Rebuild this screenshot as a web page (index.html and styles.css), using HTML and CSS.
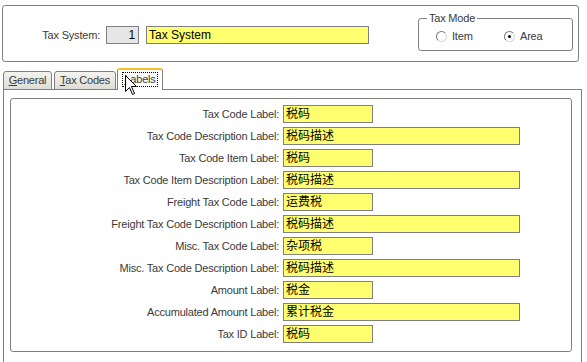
FILE: index.html
```html
<!DOCTYPE html>
<html lang="en">
<head>
<meta charset="UTF-8">
<meta name="viewport" content="width=device-width, initial-scale=1.0">
<title>Tax System</title>
<link rel="stylesheet" href="styles.css">
</head>
<body>
  <div class="header">
    <div class="sys-row">
      <span class="sys-label">Tax System:</span>
      <span class="num-box">1</span>
      <span class="field field-name">Tax System</span>
    </div>
    <fieldset class="mode-group">
      <legend>Tax Mode</legend>
      <label class="radio"><span class="dot"></span>Item</label>
      <label class="radio"><span class="dot checked"></span>Area</label>
    </fieldset>
  </div>

  <div class="tabs">
    <div class="tab"><u>G</u>eneral</div>
    <div class="tab tab-codes"><u>T</u>ax Codes</div>
    <div class="tab active"><span class="focus"><u>L</u>abels</span></div>
  </div>

  <div class="panel">
    <div class="inner">
      <div class="row"><span class="lbl">Tax Code Label:</span><span class="field short">税码</span></div>
      <div class="row"><span class="lbl">Tax Code Description Label:</span><span class="field long">税码描述</span></div>
      <div class="row"><span class="lbl">Tax Code Item Label:</span><span class="field short">税码</span></div>
      <div class="row"><span class="lbl">Tax Code Item Description Label:</span><span class="field long">税码描述</span></div>
      <div class="row"><span class="lbl">Freight Tax Code Label:</span><span class="field short">运费税</span></div>
      <div class="row"><span class="lbl">Freight Tax Code Description Label:</span><span class="field long">税码描述</span></div>
      <div class="row"><span class="lbl">Misc. Tax Code Label:</span><span class="field short">杂项税</span></div>
      <div class="row"><span class="lbl">Misc. Tax Code Description Label:</span><span class="field long">税码描述</span></div>
      <div class="row"><span class="lbl">Amount Label:</span><span class="field short">税金</span></div>
      <div class="row"><span class="lbl">Accumulated Amount Label:</span><span class="field long">累计税金</span></div>
      <div class="row"><span class="lbl">Tax ID Label:</span><span class="field short">税码</span></div>
    </div>
  </div>

  <svg class="cursor" width="13" height="21" viewBox="0 0 13 21">
    <path d="M0.5 0.5 L0.5 16.5 L4.5 12.5 L7.5 19.5 L9.5 18.5 L6.5 11.5 L11.5 11.5 Z" fill="#fff" stroke="#000" stroke-width="1"/>
  </svg>
</body>
</html>
```
FILE: styles.css
```css
body {
  margin: 0;
  background-color: #fff;
  font-family: "Liberation Sans", Arial, "Noto Sans CJK SC", sans-serif;
  font-size: 11px;
  letter-spacing: -0.2px;
  color: #3a3a3a;
  height: 362px;
  overflow: hidden;
  position: relative;
}

.header {
  box-sizing: border-box;
  margin: 5px 0 0 2px;
  width: 577px;
  height: 57px;
  border: 1px solid #808080;
  border-radius: 3px;
  display: flex;
  align-items: flex-start;
}

.sys-row {
  display: flex;
  align-items: center;
  margin-top: 20px;
}

.sys-label {
  width: 97px;
  text-align: right;
}

.num-box {
  box-sizing: border-box;
  margin-left: 6px;
  width: 33px;
  height: 18px;
  line-height: 16px;
  border: 1px solid #808080;
  background-color: #e6e6e6;
  text-align: right;
  padding-right: 3px;
  color: #000;
  font-size: 12px;
}

.field {
  box-sizing: border-box;
  display: block;
  height: 18px;
  line-height: 16px;
  border: 1px solid #808080;
  background-color: #ffff70;
  color: #000;
  padding-left: 2px;
  font-size: 12px;
  letter-spacing: 0;
}

.field-name {
  margin-left: 7px;
  width: 223px;
}

.mode-group {
  box-sizing: border-box;
  margin: 6px 0 0 49px;
  width: 155px;
  height: 39px;
  padding: 5px 0 0 0;
  border: 1px solid #808080;
  border-radius: 3px;
  display: flex;
  align-items: flex-start;
}

.mode-group legend {
  padding: 0 2px;
  margin-left: 8px;
  line-height: 13px;
}

.radio {
  display: flex;
  align-items: center;
  width: 68px;
}

.radio:first-of-type {
  margin-left: 17px;
}

.dot {
  box-sizing: border-box;
  width: 11px;
  height: 11px;
  border-radius: 50%;
  border: 1px solid #7a7a7a;
  border-right-color: #d8d8d8;
  border-bottom-color: #d8d8d8;
  background-color: #fff;
  margin-right: 5px;
  position: relative;
}

.dot.checked::after {
  content: "";
  position: absolute;
  left: 3px;
  top: 3px;
  width: 3px;
  height: 3px;
  border-radius: 50%;
  background-color: #000;
}

.tabs {
  display: flex;
  align-items: flex-end;
  margin: 6px 0 0 3px;
  height: 21px;
  position: relative;
  z-index: 1;
}

.tab {
  box-sizing: border-box;
  height: 19px;
  width: 49px;
  margin-bottom: -1px;
  border: 1px solid #808080;
  border-radius: 3px 3px 0 0;
  background: linear-gradient(#f4f3ee, #dedcd6);
  text-align: center;
  line-height: 17px;
}

.tab-codes {
  margin-left: 2px;
  width: 62px;
}

.tab.active {
  width: 46px;
  height: 22px;
  margin-left: 1px;
  background: #fff;
  border-bottom: none;
  border-top: 2px solid #f4c020;
  padding-top: 2px;
  line-height: 13px;
}

.focus {
  display: inline-block;
  border: 1px dotted #000;
  padding: 0 1px;
}

.panel {
  box-sizing: border-box;
  margin-left: 3px;
  width: 579px;
  height: 290px;
  border: 1px solid #808080;
  padding: 8px 9px 0 6px;
}

.inner {
  box-sizing: border-box;
  height: 254px;
  border: 1px solid #808080;
  border-radius: 3px;
  padding: 6px 0 0 0;
  display: flex;
  flex-direction: column;
  gap: 4px;
}

.row {
  display: flex;
  align-items: center;
  height: 18px;
}

.lbl {
  width: 268px;
  text-align: right;
  margin-right: 4px;
}

.short {
  width: 90px;
}

.long {
  width: 237px;
}

.cursor {
  position: absolute;
  left: 125px;
  top: 75px;
  z-index: 5;
}
```
